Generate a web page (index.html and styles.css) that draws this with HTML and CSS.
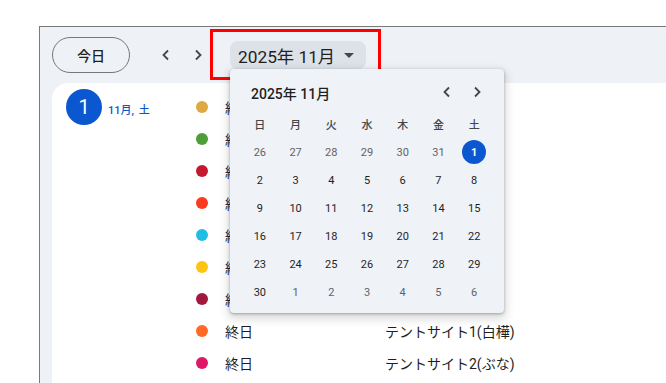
FILE: index.html
```html
<!DOCTYPE html>
<html lang="ja">
<head>
<meta charset="utf-8">
<link rel="stylesheet" href="styles.css">
</head>
<body>
<div class="frame">
  <div class="toolbar">
    <button class="today">今日</button>
    <button class="icon-btn prev" aria-label="前">
      <svg width="10" height="12" viewBox="0 0 10 12"><polyline points="7,1.5 2.5,6 7,10.5" fill="none" stroke="#444746" stroke-width="1.8"/></svg>
    </button>
    <button class="icon-btn next" aria-label="次">
      <svg width="10" height="12" viewBox="0 0 10 12"><polyline points="3,1.5 7.5,6 3,10.5" fill="none" stroke="#444746" stroke-width="1.8"/></svg>
    </button>
    <button class="month-chip">2025年 11月<span class="caret"></span></button>
  </div>
  <div class="content">
    <div class="date-col">
      <div class="day-circle">1</div>
      <div class="day-label">11月, 土</div>
    </div>
    <div class="events">
      <div class="event"><span class="dot c1"></span><span class="time">終日</span></div>
      <div class="event"><span class="dot c2"></span><span class="time">終日</span></div>
      <div class="event"><span class="dot c3"></span><span class="time">終日</span></div>
      <div class="event"><span class="dot c4"></span><span class="time">終日</span></div>
      <div class="event"><span class="dot c5"></span><span class="time">終日</span></div>
      <div class="event"><span class="dot c6"></span><span class="time">終日</span></div>
      <div class="event"><span class="dot c7"></span><span class="time">終日</span></div>
      <div class="event"><span class="dot c8"></span><span class="time">終日</span><span class="title">テントサイト1(白樺)</span></div>
      <div class="event"><span class="dot c9"></span><span class="time">終日</span><span class="title">テントサイト2(ぶな)</span></div>
    </div>
  </div>
</div>

<div class="highlight"></div>

<div class="picker">
  <div class="picker-head">
    <span class="picker-title">2025年 11月</span>
    <span class="picker-nav">
      <svg width="10" height="12" viewBox="0 0 10 12"><polyline points="7,1.5 2.5,6 7,10.5" fill="none" stroke="#444746" stroke-width="1.8"/></svg>
      <svg width="10" height="12" viewBox="0 0 10 12"><polyline points="3,1.5 7.5,6 3,10.5" fill="none" stroke="#444746" stroke-width="1.8"/></svg>
    </span>
  </div>
  <div class="grid">
    <span class="wd">日</span><span class="wd">月</span><span class="wd">火</span><span class="wd">水</span><span class="wd">木</span><span class="wd">金</span><span class="wd">土</span>
    <span class="d out">26</span><span class="d out">27</span><span class="d out">28</span><span class="d out">29</span><span class="d out">30</span><span class="d out">31</span><span class="d sel"><b>1</b></span>
    <span class="d">2</span><span class="d">3</span><span class="d">4</span><span class="d">5</span><span class="d">6</span><span class="d">7</span><span class="d">8</span>
    <span class="d">9</span><span class="d">10</span><span class="d">11</span><span class="d">12</span><span class="d">13</span><span class="d">14</span><span class="d">15</span>
    <span class="d">16</span><span class="d">17</span><span class="d">18</span><span class="d">19</span><span class="d">20</span><span class="d">21</span><span class="d">22</span>
    <span class="d">23</span><span class="d">24</span><span class="d">25</span><span class="d">26</span><span class="d">27</span><span class="d">28</span><span class="d">29</span>
    <span class="d">30</span><span class="d out">1</span><span class="d out">2</span><span class="d out">3</span><span class="d out">4</span><span class="d out">5</span><span class="d out">6</span>
  </div>
</div>
</body>
</html>
```
FILE: styles.css
```css
* { box-sizing: border-box; }
html, body { margin: 0; padding: 0; }
body {
  background: #fff;
  font-family: Roboto, "Noto Sans CJK JP", sans-serif;
  color: #1f1f1f;
  height: 383px;
  overflow: hidden;
}
button { font-family: inherit; cursor: pointer; }

.frame {
  margin: 26px 0 0 39px;
  height: 357px;
  border-top: 1px solid #7a7a7a;
  border-left: 1px solid #7a7a7a;
  background: #eef1f6;
  display: flex;
  flex-direction: column;
}

.toolbar {
  height: 56px;
  flex: none;
  display: flex;
  align-items: center;
  padding-left: 12px;
}
.today {
  width: 78px;
  height: 36px;
  border: 1px solid #747775;
  border-radius: 18px;
  background: transparent;
  font-size: 14px;
  font-weight: 500;
  color: #1f1f1f;
  padding: 0;
}
.icon-btn {
  width: 32px;
  height: 32px;
  border: 0;
  background: transparent;
  padding: 0;
  display: flex;
  align-items: center;
  justify-content: center;
}
.prev { margin-left: 20px; }
.month-chip {
  margin-left: 16px;
  width: 136px;
  height: 28px;
  border: 0;
  border-radius: 8px;
  background: #dde1e8;
  font-size: 17.3px;
  color: #1f1f1f;
  padding: 0 0 0 8px;
  display: flex;
  align-items: center;
  white-space: nowrap;
}
.caret {
  margin-left: 9px;
  width: 0;
  height: 0;
  border-left: 5px solid transparent;
  border-right: 5px solid transparent;
  border-top: 5px solid #444746;
}

.content {
  flex: 1;
  margin-left: 12px;
  background: #fff;
  border-top-left-radius: 16px;
  display: flex;
}
.date-col {
  width: 144px;
  flex: none;
  display: flex;
  align-items: center;
  align-self: flex-start;
  padding: 6px 0 0 14px;
}
.day-circle {
  width: 36px;
  height: 36px;
  border-radius: 50%;
  background: #0b57d0;
  color: #fff;
  font-size: 20px;
  display: flex;
  align-items: center;
  justify-content: center;
}
.day-label {
  margin-left: 6px;
  margin-top: 4px;
  font-size: 11px;
  font-weight: 500;
  color: #0b57d0;
  word-spacing: 2px;
}
.events { padding-top: 8px; }
.event {
  height: 32px;
  display: flex;
  align-items: center;
  font-size: 14px;
  color: #1f1f1f;
  white-space: nowrap;
}
.dot {
  width: 12px;
  height: 12px;
  border-radius: 50%;
  flex: none;
}
.time { margin-left: 17px; width: 160px; }
.c1 { background: #e0a840; }
.c2 { background: #4b9e38; }
.c3 { background: #c3192f; }
.c4 { background: #fa3b20; }
.c5 { background: #23bde3; }
.c6 { background: #fdc411; }
.c7 { background: #a1183e; }
.c8 { background: #ff6a24; }
.c9 { background: #de1767; }

.highlight {
  position: absolute;
  left: 210px;
  top: 29px;
  width: 171px;
  height: 51px;
  border: 3px solid #ff0000;
}

.picker {
  position: absolute;
  left: 230px;
  top: 69px;
  width: 274px;
  height: 244px;
  background: #eff2f7;
  border-radius: 4px;
  box-shadow: 0 1px 3px rgba(0,0,0,0.3), 0 4px 8px 3px rgba(0,0,0,0.12);
}
.picker-head {
  height: 41px;
  padding: 7px 22px 0 21px;
  display: flex;
  align-items: center;
  justify-content: space-between;
}
.picker-title {
  font-size: 14px;
  font-weight: 500;
  color: #1f1f1f;
}
.picker-nav {
  display: flex;
  gap: 20px;
  margin-top: -2px;
}
.grid {
  margin-left: 12px;
  width: 250px;
  display: grid;
  grid-template-columns: repeat(7, 1fr);
  grid-auto-rows: 28px;
}
.wd, .d {
  display: flex;
  align-items: center;
  justify-content: center;
}
.wd {
  font-size: 11px;
  font-weight: 500;
  color: #444746;
}
.d {
  font-size: 11px;
  font-weight: 400;
  color: #1f1f1f;
}
.d.out { color: #5f6368; }
.d.sel b {
  width: 24px;
  height: 24px;
  border-radius: 50%;
  background: #0b57d0;
  color: #fff;
  font-weight: 700;
  display: flex;
  align-items: center;
  justify-content: center;
}
```
